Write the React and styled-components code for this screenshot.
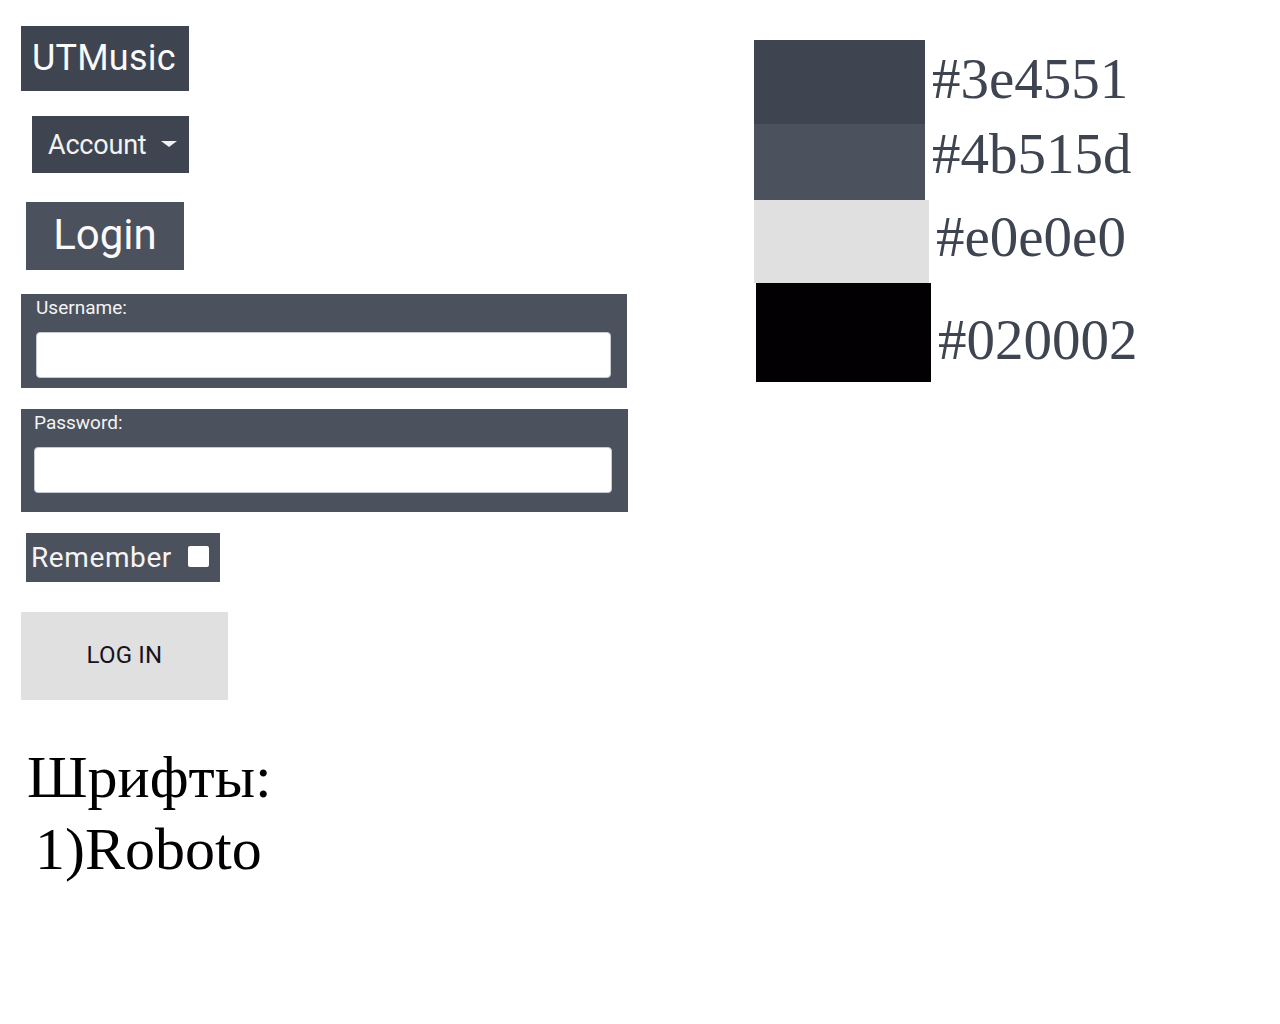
import React from "react";
import styled, { createGlobalStyle } from "styled-components";

const GlobalStyle = createGlobalStyle`
  html, body {
    margin: 0;
    padding: 0;
    background: #ffffff;
  }
`;

const Page = styled.div`
  display: grid;
  grid-template-columns: 754px auto;
  width: 1280px;
  min-height: 1024px;
`;

const LeftColumn = styled.div`
  display: flex;
  flex-direction: column;
  align-items: flex-start;
  padding-top: 26px;
  font-family: Roboto, "Liberation Sans", sans-serif;
`;

const Brand = styled.div`
  display: flex;
  align-items: center;
  box-sizing: border-box;
  margin-left: 21px;
  width: 168px;
  height: 65px;
  padding: 0 0 2px 11px;
  background: #3e4551;
  color: #fafafa;
  font-size: 36px;
  letter-spacing: 0.2px;
`;

const AccountButton = styled.div`
  display: flex;
  align-items: center;
  gap: 14px;
  box-sizing: border-box;
  margin: 25px 0 0 32px;
  width: 157px;
  height: 57px;
  padding-left: 16px;
  background: #3e4551;
  color: #f2f2f2;
  font-size: 27px;
  letter-spacing: -0.2px;
`;

const Caret = styled.span`
  width: 0;
  height: 0;
  border-left: 8px solid transparent;
  border-right: 8px solid transparent;
  border-top: 6px solid #f2f2f2;
  margin-top: -2px;
`;

const LoginTitle = styled.div`
  display: flex;
  align-items: center;
  justify-content: center;
  box-sizing: border-box;
  margin: 29px 0 0 26px;
  width: 158px;
  height: 68px;
  padding-bottom: 4px;
  background: #4b515d;
  color: #fafafa;
  font-size: 42px;
`;

const FieldPanel = styled.div`
  display: flex;
  flex-direction: column;
  box-sizing: border-box;
  margin: ${(p) => p.$top}px 0 0 21px;
  width: ${(p) => p.$width}px;
  padding: 3px 16px ${(p) => p.$bottom}px ${(p) => p.$left}px;
  background: #4b515d;
`;

const FieldLabel = styled.label`
  color: #f4f4f4;
  font-size: 19px;
  line-height: 22px;
  height: 35px;
`;

const TextInput = styled.input`
  box-sizing: border-box;
  width: 100%;
  height: 46px;
  margin: 0;
  background: #ffffff;
  border: 1px solid #c6cad1;
  border-radius: 4px;
  outline: none;
`;

const RememberBox = styled.label`
  display: flex;
  align-items: center;
  gap: 16px;
  box-sizing: border-box;
  margin: 21px 0 0 26px;
  width: 194px;
  height: 49px;
  padding-left: 5px;
  background: #4b515d;
  color: #f4f4f4;
  font-size: 28px;
  letter-spacing: 0.6px;
`;

const Check = styled.input`
  appearance: none;
  width: 21px;
  height: 21px;
  margin: -3px 0 0 0;
  background: #ffffff;
  border-radius: 2px;
`;

const SubmitButton = styled.button`
  display: flex;
  align-items: center;
  justify-content: center;
  margin: 30px 0 0 21px;
  width: 207px;
  height: 88px;
  padding: 0 0 2px 0;
  background: #e0e0e0;
  border: none;
  color: #15141c;
  font-family: Roboto, "Liberation Sans", sans-serif;
  font-size: 24px;
  font-weight: 400;
  letter-spacing: 0.2px;
`;

const FontNote = styled.div`
  margin: 41px 0 0 27px;
  font-family: "Liberation Serif", "DejaVu Serif", serif;
  font-size: 60px;
  line-height: 72px;
  color: #020002;
`;

const FontItem = styled.div`
  padding-left: 8px;
`;

const RightColumn = styled.div`
  display: flex;
  flex-direction: column;
  padding-top: 40px;
`;

const SwatchRow = styled.div`
  display: flex;
  align-items: center;
`;

const Swatch = styled.div`
  width: ${(p) => p.$w}px;
  height: ${(p) => p.$h}px;
  margin-left: ${(p) => p.$shift}px;
  background: ${(p) => p.$color};
`;

const HexLabel = styled.span`
  padding-left: 7px;
  margin-top: ${(p) => p.$dy}px;
  font-family: "Liberation Serif", "DejaVu Serif", serif;
  font-size: 57px;
  color: #3e4551;
`;

const swatches = [
  { color: "#3e4551", w: 171, h: 84, shift: 0, dy: -8 },
  { color: "#4b515d", w: 171, h: 76, shift: 0, dy: -18 },
  { color: "#e0e0e0", w: 175, h: 83, shift: 0, dy: -10 },
  { color: "#020002", w: 175, h: 99, shift: 2, dy: 14 },
];

export default function App() {
  return (
    <>
      <GlobalStyle />
      <Page>
        <LeftColumn>
          <Brand>UTMusic</Brand>
          <AccountButton>
            Account
            <Caret />
          </AccountButton>
          <LoginTitle>Login</LoginTitle>
          <FieldPanel $top={24} $width={606} $left={15} $bottom={10}>
            <FieldLabel>Username:</FieldLabel>
            <TextInput type="text" />
          </FieldPanel>
          <FieldPanel $top={21} $width={607} $left={13} $bottom={19}>
            <FieldLabel>Password:</FieldLabel>
            <TextInput type="password" />
          </FieldPanel>
          <RememberBox>
            Remember
            <Check type="checkbox" />
          </RememberBox>
          <SubmitButton>LOG IN</SubmitButton>
          <FontNote>
            Шрифты:
            <FontItem>1)Roboto</FontItem>
          </FontNote>
        </LeftColumn>
        <RightColumn>
          {swatches.map((s) => (
            <SwatchRow key={s.color}>
              <Swatch $w={s.w} $h={s.h} $shift={s.shift} $color={s.color} />
              <HexLabel $dy={s.dy}>{s.color}</HexLabel>
            </SwatchRow>
          ))}
        </RightColumn>
      </Page>
    </>
  );
}
